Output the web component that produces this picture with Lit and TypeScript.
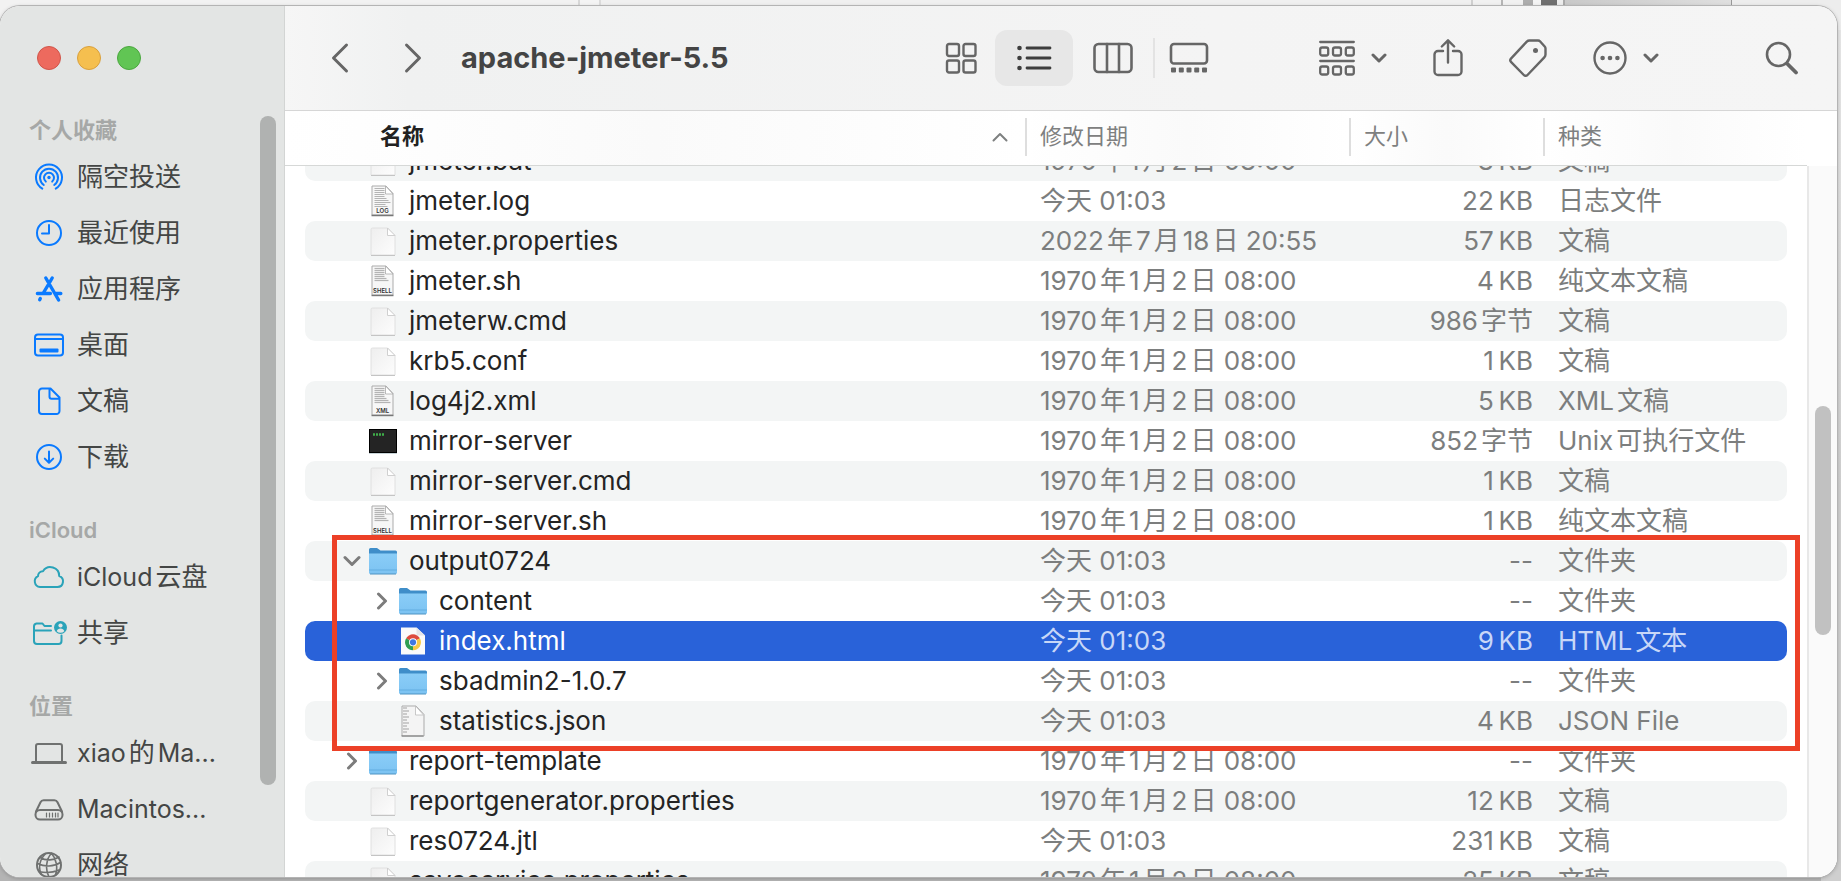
import { LitElement, html, svg, css, TemplateResult } from "lit";
import { customElement, state } from "lit/decorators.js";
import { classMap } from "lit/directives/class-map.js";

/** Splits text into CJK and Latin runs, with a small gap where the scripts touch. */
const mixed = (text: string) => {
  const runs = text.match(/[\u3400-\u9fff]+|[^\u3400-\u9fff]+/g) ?? [];
  return runs.map((run, i) => {
    if (!/[\u3400-\u9fff]/.test(run)) return html`${run}`;
    const before = i > 0 && !/\s$/.test(runs[i - 1]);
    const after = i < runs.length - 1 && !/^\s/.test(runs[i + 1]);
    return html`<span class=${classMap({ cjk: true, before, after })}>${run}</span>`;
  });
};

const sheet = (w: number, h: number, body: unknown) =>
  html`<svg width=${w} height=${h} viewBox="0 0 ${w} ${h}" fill="none" stroke="currentColor"
    stroke-width="2" stroke-linecap="round" stroke-linejoin="round" aria-hidden="true">${body}</svg>`;

const sideIcons: Record<string, TemplateResult> = {
  airdrop: sheet(36, 30, svg`
    <circle cx="18" cy="15.500" r="1.700" fill="currentColor" stroke="none"/>
    <path d="M14.800 19.600a5 5 0 1 1 6.400 0M12.800 23a9 9 0 1 1 10.400 0M11.300 26.600a13 13 0 1 1 13.400 0"/>`),
  recent: sheet(36, 30, svg`<circle cx="18" cy="15" r="12"/><path d="M18 7v8.500h-7"/>`),
  apps: sheet(36, 30, svg`
    <path stroke-width="3.400" d="M14.800 4l3.200 5.500 9.600 16.500M21.200 4l-3.200 5.500L12.600 18.500M6.400 19.500h13M25.200 19.500h4.600M9.300 24.600l-.6 1.200"/>`),
  desktop: sheet(36, 30, svg`
    <rect x="4" y="4.500" width="28" height="21" rx="3"/><path d="M4 9h28"/>
    <rect x="8.500" y="18.500" width="19" height="4" rx="1" fill="currentColor" stroke="none"/>`),
  doc: sheet(36, 30, svg`
    <path d="M11 2.500h8.500l9 9V25a3 3 0 0 1-3 3H11a3 3 0 0 1-3-3V5.500a3 3 0 0 1 3-3zM18.500 2.800v8a2 2 0 0 0 2 2h7.800"/>`),
  download: sheet(36, 30, svg`<circle cx="18" cy="15" r="12"/><path d="M18 9.500v11M13.800 16.600l4.200 4.200 4.200-4.200"/>`),
  cloud: sheet(36, 30, svg`
    <path d="M9 25h17.500a5.600 5.600 0 0 0 1.700-10.900A8.800 8.800 0 0 0 12 9.200a4.800 4.800 0 0 0-5 5A5.700 5.700 0 0 0 9 25z"/>`),
  shared: sheet(36, 30, svg`
    <path d="M20 8h-6.500l-2-2.500H5.500A3 3 0 0 0 3 8.500V23a3 3 0 0 0 3 3h21.500a3 3 0 0 0 3-3v-5.500M3 12.500h17"/>
    <circle cx="29.500" cy="9.500" r="6.500" fill="currentColor" stroke="none"/>
    <circle cx="29.500" cy="7.500" r="2.100" fill="#e3e5e4" stroke="none"/>
    <path d="M25.700 13.200a4 4 0 0 1 7.600 0 5.500 5.500 0 0 1-7.600 0z" fill="#e3e5e4" stroke="none"/>`),
  laptop: sheet(36, 30, svg`
    <path d="M5 23V8a2 2 0 0 1 2-2h22a2 2 0 0 1 2 2v15"/><path stroke-width="3" d="M1.500 24.500h33"/>`),
  disk: sheet(36, 30, svg`
    <path d="M5 17.500l4.500-9.300a3.500 3.500 0 0 1 3.200-2h10.600a3.500 3.500 0 0 1 3.200 2L31 17.500"/>
    <rect x="4.500" y="16" width="27" height="9.500" rx="4.500"/>
    <path stroke-width="1.200" d="M15.500 19v4M18.500 19v4M21.500 19v4M24.500 19v4M27 19v4"/>`),
  globe: sheet(36, 30, svg`
    <circle cx="18" cy="15" r="12"/>
    <path stroke-width="1.600" d="M20.500 3.300C15 9 14 20 18 27M14.500 3.600c-6 6-7 14-4.500 20.500M20.500 3.300C25.500 9 27 18 24.500 25M9 7.500c6 3.500 14 3 19-.500M6.500 13.500c7 3.500 16 3.500 23-1M8 21.500c6 1.500 14 1 20-1.500"/>`),
};

const chevronDown = sheet(16, 12, svg`<path stroke-width="3" d="M2 3l6 6 6-6"/>`);

const toolIcons: Record<string, TemplateResult> = {
  back: sheet(20, 32, svg`<path stroke-width="3" d="M16.500 3L3.500 16l13 13"/>`),
  forward: sheet(20, 32, svg`<path stroke-width="3" d="M3.500 3l13 13-13 13"/>`),
  grid: sheet(32, 32, svg`<g stroke-width="2.400">
    <rect x="2" y="2" width="12" height="12" rx="2"/><rect x="18.500" y="2" width="12" height="12" rx="2"/>
    <rect x="2" y="18.500" width="12" height="12" rx="2"/><rect x="18.500" y="18.500" width="12" height="12" rx="2"/></g>`),
  list: sheet(36, 28, svg`
    <g fill="currentColor" stroke="none"><circle cx="3.500" cy="4" r="2.300"/><circle cx="3.500" cy="14" r="2.300"/><circle cx="3.500" cy="24" r="2.300"/></g>
    <path stroke-width="2.800" d="M11 4h23M11 14h23M11 24h23"/>`),
  columns: sheet(40, 32, svg`<rect x="1.500" y="2" width="37" height="28" rx="4" stroke-width="2.600"/><path stroke-width="2.600" d="M14 2v28M26 2v28"/>`),
  gallery: sheet(40, 32, svg`
    <rect x="2" y="2" width="36" height="19.500" rx="3" stroke-width="2.600"/>
    <g fill="currentColor" stroke="none"><rect x="2" y="25.500" width="5" height="5" rx="1"/><rect x="9.800" y="25.500" width="5" height="5" rx="1"/><rect x="17.500" y="25.500" width="5" height="5" rx="1"/><rect x="25.200" y="25.500" width="5" height="5" rx="1"/><rect x="33" y="25.500" width="5" height="5" rx="1"/></g>`),
  group: sheet(36, 36, svg`<g stroke-width="2.300">
    <path d="M1.200 2h33.600M1.200 21h33.600"/>
    <rect x="1.200" y="7.500" width="8" height="8" rx="2"/><rect x="14" y="7.500" width="8" height="8" rx="2"/><rect x="26.800" y="7.500" width="8" height="8" rx="2"/>
    <rect x="1.200" y="26.500" width="8" height="8" rx="2"/><rect x="14" y="26.500" width="8" height="8" rx="2"/><rect x="26.800" y="26.500" width="8" height="8" rx="2"/></g>`),
  share: sheet(30, 40, svg`
    <path stroke-width="2.400" d="M10 13H5a3.500 3.500 0 0 0-3.500 3.500v17A3.500 3.500 0 0 0 5 37h20a3.500 3.500 0 0 0 3.500-3.500v-17A3.500 3.500 0 0 0 25 13h-5M15 24.500V3M8.800 8.500L15 2.300l6.200 6.200"/>`),
  tag: sheet(38, 40, svg`
    <path stroke-width="2.400" d="M20.500 2.500h8.500a3 3 0 0 1 2.200 1l4.500 5a3 3 0 0 1 .8 2v6a4 4 0 0 1-1.200 2.800L18.500 37a2.500 2.500 0 0 1-3.700 0L2.200 24.200a2.800 2.800 0 0 1 0-3.900L17.800 3.600a4 4 0 0 1 2.700-1.100z"/>
    <circle cx="26.500" cy="12.500" r="2.500" fill="currentColor" stroke="none"/>`),
  more: sheet(34, 36, svg`
    <circle cx="17" cy="18" r="15.500" stroke-width="2.400"/>
    <g fill="currentColor" stroke="none"><circle cx="9.600" cy="18" r="2.300"/><circle cx="17" cy="18" r="2.300"/><circle cx="24.400" cy="18" r="2.300"/></g>`),
  search: sheet(34, 34, svg`<circle cx="13.500" cy="13.500" r="11.500" stroke-width="2.600"/><path stroke-width="3.800" d="M22.500 23l8.500 8.500"/>`),
};

type Kind = "blank" | "log" | "shell" | "xml" | "json" | "exec" | "folder" | "chrome";

const paper = (label?: string, lines = 0) => html`<svg class="file" width="30" height="34" viewBox="0 0 30 34" aria-hidden="true">
  <defs><linearGradient id="p" x1="0" y1="0" x2="1" y2="1"><stop offset="0" stop-color="#eeeeee"/><stop offset="1" stop-color="#fdfdfd"/></linearGradient></defs>
  ${label
    ? svg`<path d="M4 2h14l7 7.500V31H4z" fill="#f7f7f7" stroke="#ababab" stroke-width="1"/>
      <path d="M3.500 31.500h22" stroke="#777" stroke-width="1.400"/>
      ${Array.from({ length: lines }, (_, i) => svg`<path d=${`M6.500 ${4.5 + i * 2}h${i < 4 ? 10 : 16 - ((i * 5) % 7)}`} stroke="#b4b4b4" stroke-width="1.200"/>`)}
      <path d="M17.500 2l7.500 8h-7.500z" fill="#fff" stroke="#aaa" stroke-width=".8"/>
      <text class="tag" x="14.500" y="28.500" text-anchor="middle">${label}</text>`
    : svg`<path d="M4.500 4h15l7.500 7.500V31h-24V5.500A1.500 1.500 0 0 1 4.500 4z" fill="url(#p)" stroke="#e0e0e0" stroke-width="1"/>
      <path d="M3 31.500h24" stroke="#c4c4c4" stroke-width="1"/>
      <path d="M19.500 4l7.500 7.500h-7.500z" fill="#fff" stroke="#d0d0d0" stroke-width="1"/>`}
</svg>`;

const fileIcon = (kind: Kind) => {
  switch (kind) {
    case "log": return paper("LOG", 10);
    case "shell": return paper("SHELL", 7);
    case "xml": return paper("XML", 8);
    case "json": return html`<svg class="file" width="30" height="34" viewBox="0 0 30 34" aria-hidden="true">
      <path d="M4 2h14l8 8.500V32H4z" fill="#f4f4f4" stroke="#ababab"/>
      <path d="M3.500 32h22" stroke="#777"/>
      <path d="M5 4h4M5 7h6M5 10h4M5 13h6M5 16h4M5 19h6M5 22h4M5 25h6M5 28h4" stroke="#a2a2a2" stroke-width="1.200"/>
      <path d="M17.500 2l8 9h-8z" fill="#fff" stroke="#bbb" stroke-width=".8"/></svg>`;
    case "exec": return html`<svg class="file" width="30" height="34" viewBox="0 0 30 34" aria-hidden="true">
      <rect x="1.500" y="5.500" width="27" height="23" fill="#242424" stroke="#000"/>
      <path d="M1 29.500h28" stroke="#c8d4d8"/>
      <path d="M5 10.500h11" stroke="#3fae49" stroke-width="2.500" stroke-dasharray="2 1"/></svg>`;
    case "folder": return html`<svg class="file" width="30" height="34" viewBox="0 0 30 34" aria-hidden="true">
      <defs><linearGradient id="f" x1="0" y1="0" x2="0" y2="1"><stop offset="0" stop-color="#8acdf7"/><stop offset="1" stop-color="#7cc3f2"/></linearGradient></defs>
      <path d="M1 5.500A1.500 1.500 0 0 1 2.500 4H9l3.500 2.500h15A1.500 1.500 0 0 1 29 8v5H1z" fill="#3f8ec9"/>
      <path d="M1 9.500h28v19a1.500 1.500 0 0 1-1.500 1.500h-25A1.500 1.500 0 0 1 1 28.500z" fill="url(#f)"/>
      <path d="M1 26h28" stroke="#62ade0"/><path d="M2 30h26" stroke="#4f93c2"/></svg>`;
    case "chrome": return html`<svg class="file" width="30" height="34" viewBox="0 0 30 34" aria-hidden="true">
      <path d="M3 3.500h15.500l8.500 8V30.500H3z" fill="#fafafa"/>
      <path d="M18.500 3.500l8.500 8h-8.500z" fill="#e4e4e8"/>
      <path d="M15 18.300L8.100 14.300A8 8 0 0 1 21.900 14.300z" fill="#dd4b3e"/>
      <path d="M15 18.300L21.900 14.300A8 8 0 0 1 15 26.300z" fill="#f7c945"/>
      <path d="M15 18.300L15 26.300A8 8 0 0 1 8.100 14.300z" fill="#2f9e50"/>
      <circle cx="15" cy="18.300" r="4" fill="#fff"/><circle cx="15" cy="18.300" r="3.100" fill="#3f78e0"/></svg>`;
    default: return paper();
  }
};

interface Entry { name: string; kind: Kind; date: string; size: string; type: string; level?: number; open?: boolean }

const OLD = "1970年1月2日 08:00";
const TODAY = "今天 01:03";
const entries: Entry[] = [
  { name: "jmeter.bat", kind: "blank", date: OLD, size: "8\u202fKB", type: "文稿" },
  { name: "jmeter.log", kind: "log", date: TODAY, size: "22\u202fKB", type: "日志文件" },
  { name: "jmeter.properties", kind: "blank", date: "2022年7月18日 20:55", size: "57\u202fKB", type: "文稿" },
  { name: "jmeter.sh", kind: "shell", date: OLD, size: "4\u202fKB", type: "纯文本文稿" },
  { name: "jmeterw.cmd", kind: "blank", date: OLD, size: "986字节", type: "文稿" },
  { name: "krb5.conf", kind: "blank", date: OLD, size: "1\u202fKB", type: "文稿" },
  { name: "log4j2.xml", kind: "xml", date: OLD, size: "5\u202fKB", type: "XML文稿" },
  { name: "mirror-server", kind: "exec", date: OLD, size: "852字节", type: "Unix可执行文件" },
  { name: "mirror-server.cmd", kind: "blank", date: OLD, size: "1\u202fKB", type: "文稿" },
  { name: "mirror-server.sh", kind: "shell", date: OLD, size: "1\u202fKB", type: "纯文本文稿" },
  { name: "output0724", kind: "folder", date: TODAY, size: "--", type: "文件夹", open: true },
  { name: "content", kind: "folder", date: TODAY, size: "--", type: "文件夹", level: 1 },
  { name: "index.html", kind: "chrome", date: TODAY, size: "9\u202fKB", type: "HTML文本", level: 1 },
  { name: "sbadmin2-1.0.7", kind: "folder", date: TODAY, size: "--", type: "文件夹", level: 1 },
  { name: "statistics.json", kind: "json", date: TODAY, size: "4\u202fKB", type: "JSON File", level: 1 },
  { name: "report-template", kind: "folder", date: OLD, size: "--", type: "文件夹" },
  { name: "reportgenerator.properties", kind: "blank", date: OLD, size: "12\u202fKB", type: "文稿" },
  { name: "res0724.jtl", kind: "blank", date: TODAY, size: "231\u202fKB", type: "文稿" },
  { name: "saveservice.properties", kind: "blank", date: OLD, size: "25\u202fKB", type: "文稿" },
];

const places = [
  { title: "个人收藏", tone: "blue", items: [["airdrop", "隔空投送"], ["recent", "最近使用"], ["apps", "应用程序"], ["desktop", "桌面"], ["doc", "文稿"], ["download", "下载"]] },
  { title: "iCloud", tone: "teal", items: [["cloud", "iCloud云盘"], ["shared", "共享"]] },
  { title: "位置", tone: "gray", items: [["laptop", "xiao的Ma..."], ["disk", "Macintos..."], ["globe", "网络"]] },
];

const fontStack = css`Inter, "Noto Sans CJK SC", sans-serif`;

@customElement("finder-sidebar")
class FinderSidebar extends LitElement {
  static styles = css`
    :host { display: flex; flex: none; width: 285px; overflow: hidden; background: #e3e5e4; border-right: 1px solid #d3d5d4; box-sizing: border-box; }
    nav { flex: 1; min-width: 0; }
    .lights { display: flex; align-items: center; gap: 16px; height: 105px; padding: 0 0 2px 37px; box-sizing: border-box; }
    .light { width: 24px; height: 24px; padding: 0; border: 1px solid; border-radius: 50%; }
    .close { background: #ed6a5e; border-color: #d0554a; }
    .min { background: #f5bf4f; border-color: #d9a03d; }
    .max { background: #61c554; border-color: #4ba73f; }
    section + section { margin-top: 26px; }
    h2 { margin: 0; padding-left: 29px; font-size: 22px; line-height: 38px; font-weight: 600; color: #a6a8a7; }
    h2 .cjk { font-size: 22px; font-weight: 700; }
    a { display: flex; align-items: center; gap: 10px; height: 56px; padding-left: 31px; font-size: 25px; line-height: 36px; color: #444645; text-decoration: none; white-space: nowrap; }
    .cjk { font-size: 26px; line-height: 1; }
    .before { margin-left: 3px; }
    .after { margin-right: 3px; }
    svg { flex: none; }
    .blue svg { color: #0a7aff; }
    .teal svg { color: #2aa3b9; }
    .gray svg { color: #6f7170; }
    .rail { flex: none; width: 24px; padding-top: 110px; }
    .thumb { width: 16px; height: 669px; border-radius: 8px; background: #b0b2b1; }
  `;
  render() {
    return html`
      <nav aria-label="边栏">
        <div class="lights">
          <button class="light close" aria-label="关闭"></button>
          <button class="light min" aria-label="最小化"></button>
          <button class="light max" aria-label="缩放"></button>
        </div>
        ${places.map(p => html`<section class=${p.tone}>
          <h2>${mixed(p.title)}</h2>
          ${p.items.map(([icon, label]) => html`<a href="#">${sideIcons[icon]}<span>${mixed(label)}</span></a>`)}
        </section>`)}
      </nav>
      <div class="rail"><div class="thumb"></div></div>`;
  }
}

@customElement("finder-toolbar")
class FinderToolbar extends LitElement {
  static styles = css`
    :host { display: flex; align-items: center; flex: none; height: 105px; box-sizing: border-box; padding: 0 38px 1px 35px; color: #666; background: linear-gradient(90deg, #f6f6f6, #f0f1f1 8%, #f4f4f4 60%, #f5f5f5); border-bottom: 1px solid #d6d6d6; }
    button { display: flex; align-items: center; justify-content: center; flex: none; padding: 0; border: 0; background: none; color: inherit; }
    svg { flex: none; display: block; }
    .nav { display: flex; gap: 33px; }
    .nav button { width: 40px; height: 56px; }
    h1 { flex: 1; min-width: 0; margin: 0 0 0 28px; font-size: 29px; line-height: 40px; font-weight: 700; color: #444; white-space: nowrap; }
    .views { display: flex; align-items: center; }
    .views button { width: 68px; height: 56px; }
    .views .wide { width: 80px; }
    .views .on { width: 78px; background: #e7e7e7; border-radius: 12px; color: #3d3d3d; }
    .sep { width: 2px; height: 40px; background: #e3e3e3; }
    .actions { display: flex; align-items: center; gap: 46px; margin-left: 96px; }
    .menu { gap: 16px; }
    .search { margin-left: 106px; }
  `;
  render() {
    return html`
      <div class="nav">
        <button aria-label="返回">${toolIcons.back}</button>
        <button aria-label="前进">${toolIcons.forward}</button>
      </div>
      <h1>apache-jmeter-5.5</h1>
      <div class="views">
        <button aria-label="图标">${toolIcons.grid}</button>
        <button class="on" aria-label="列表" aria-pressed="true">${toolIcons.list}</button>
        <button class="wide" aria-label="分栏">${toolIcons.columns}</button>
        <span class="sep"></span>
        <button aria-label="画廊">${toolIcons.gallery}</button>
      </div>
      <div class="actions">
        <button class="menu" aria-label="分组">${toolIcons.group}${chevronDown}</button>
        <button aria-label="共享">${toolIcons.share}</button>
        <button aria-label="标签">${toolIcons.tag}</button>
        <button class="menu" aria-label="操作">${toolIcons.more}${chevronDown}</button>
      </div>
      <button class="search" aria-label="搜索">${toolIcons.search}</button>`;
  }
}

@customElement("finder-list")
class FinderList extends LitElement {
  static styles = css`
    :host { display: flex; flex: 1; min-height: 0; background: #fff; }
    .scroll { flex: 1; min-width: 0; overflow-y: auto; scrollbar-width: none; }
    .sheet { position: relative; }
    table { width: 100%; table-layout: fixed; border-collapse: separate; border-spacing: 0; font-size: 26px; line-height: 36px; color: #7c7e7e; }
    .c-date { width: 324px; } .c-size { width: 194px; } .c-kind { width: 264px; }
    th { position: sticky; top: 0; z-index: 1; height: 55px; padding: 0 0 2px; box-sizing: border-box; background: linear-gradient(90deg, #fff, #fafafa 50%, #fff); border-bottom: 1px solid #d6d8d7; text-align: left; font-weight: 400; }
    .head { display: flex; align-items: center; justify-content: space-between; width: 100%; height: 38px; padding: 0 17px 2px 13px; box-sizing: border-box; border: 0; border-left: 2px solid #dedede; background: none; color: #7e8080; font: 22px/36px ${fontStack}; text-align: left; }
    .head.main { padding-left: 93px; border-left-color: transparent; color: #222; font-weight: 700; }
    .head svg { margin-top: 2px; }
    td { height: 40px; padding: 0; box-sizing: border-box; white-space: nowrap; background-clip: padding-box; }
    td.name { border-left: 20px solid transparent; border-radius: 30px 0 0 30px / 10px 0 0 10px; color: #242424; }
    td.date { padding-left: 15px; }
    td.size { padding-right: 10px; text-align: right; }
    td.kind { padding-left: 15px; border-right: 20px solid transparent; border-radius: 0 30px 30px 0 / 0 10px 10px 0; }
    tr.odd td { background-color: #f3f5f5; }
    tr.sel td { background-color: #2962d9; color: #c8d7f7; }
    tr.sel td.name { color: #fff; }
    .cell { display: flex; align-items: center; height: 40px; padding-left: 37px; }
    .level1 { padding-left: 67px; }
    .twist { display: flex; align-items: center; justify-content: center; width: 20px; height: 20px; margin-right: 6px; padding: 0; border: 0; background: none; color: #7c7c7c; }
    .file { flex: none; margin-right: 11px; }
    .tag { font: 600 6px ${fontStack}; fill: #333; }
    .cjk { font-size: 26px; line-height: 1; }
    .before { margin-left: 3px; }
    .after { margin-right: 3px; }
    .mark { position: absolute; top: 449px; left: 47px; right: 7px; height: 216px; box-sizing: border-box; border: 5px solid #ec4027; pointer-events: none; }
    .rail { flex: none; width: 30px; margin-top: 55px; padding: 240px 5px 0 6px; box-sizing: border-box; background: #fafafa; border-left: 2px solid #e8e8e8; }
    .thumb { width: 16px; height: 229px; border-radius: 8px; background: #c1c1c1; }
  `;

  @state() private selected = "index.html";

  firstUpdated() {
    this.renderRoot.querySelector(".scroll")!.scrollTop = 25;
  }

  render() {
    return html`
      <div class="scroll">
        <div class="sheet">
          <table>
            <colgroup><col /><col class="c-date" /><col class="c-size" /><col class="c-kind" /></colgroup>
            <thead><tr>
              <th><button class="head main">名称 ${sheet(16, 10, svg`<path stroke-width="2" d="M1.500 8.500L8 2l6.500 6.500" stroke="#7e8080"/>`)}</button></th>
              <th><button class="head">修改日期</button></th>
              <th><button class="head">大小</button></th>
              <th><button class="head">种类</button></th>
            </tr></thead>
            <tbody>${entries.map((e, i) => html`
              <tr class=${classMap({ odd: i % 2 === 0, sel: e.name === this.selected })} @click=${() => (this.selected = e.name)}>
                <td class="name"><div class=${classMap({ cell: true, level1: e.level === 1 })}>
                  ${e.kind === "folder"
                    ? html`<button class="twist" aria-label=${e.open ? "收起" : "展开"}>${e.open
                        ? sheet(18, 12, svg`<path stroke-width="3" d="M2 2.500l7 7 7-7"/>`)
                        : sheet(12, 18, svg`<path stroke-width="3" d="M2.500 2l7 7-7 7"/>`)}</button>`
                    : html`<span class="twist"></span>`}
                  ${fileIcon(e.kind)}<span>${e.name}</span></div></td>
                <td class="date">${mixed(e.date)}</td>
                <td class="size">${mixed(e.size)}</td>
                <td class="kind">${mixed(e.type)}</td>
              </tr>`)}
            </tbody>
          </table>
          <div class="mark"></div>
        </div>
      </div>
      <div class="rail"><div class="thumb"></div></div>`;
  }
}

@customElement("app-root")
class AppRoot extends LitElement {
  static styles = css`
    :host {
      display: flex; height: 100vh; box-sizing: border-box; padding: 6px 4px 4px 0; overflow: hidden; font-family: ${fontStack};
      background:
        linear-gradient(90deg, #f2f2f2 578px, #d8d8d8 578px 580px, #f4f4f4 580px 599px, #dcdcdc 599px 601px, #f0f0f0 601px 1471px, #d0d0d0 1471px 1473px, #f1f1f1 1473px 1501px, #b5b5b5 1501px 1503px, #f1f1f1 1503px 1523px, #adadad 1523px 1533px, #f4f4f4 1533px 1541px, #707070 1541px 1557px, #ededed 1557px 1563px, #aaa 1563px 1565px, #c9c9c9 1565px, #dfdfdf 1731px, #999 1731px 1732px, #ededed 1732px) 0 0 / 100% 30px no-repeat,
        linear-gradient(#e8e8e8, #cfcfcf 490px) 100% 0 / 20px 100% no-repeat,
        #b4b4b4;
    }
    .window { display: flex; flex: 1; min-width: 0; overflow: hidden; border-radius: 20px; background: #fff; box-shadow: 0 0 0 1px #b4b4b4, 0 1px 4px #0004; }
    main { display: flex; flex-direction: column; flex: 1; min-width: 0; }
  `;
  render() {
    return html`<div class="window">
      <finder-sidebar></finder-sidebar>
      <main><finder-toolbar></finder-toolbar><finder-list></finder-list></main>
    </div>`;
  }
}
